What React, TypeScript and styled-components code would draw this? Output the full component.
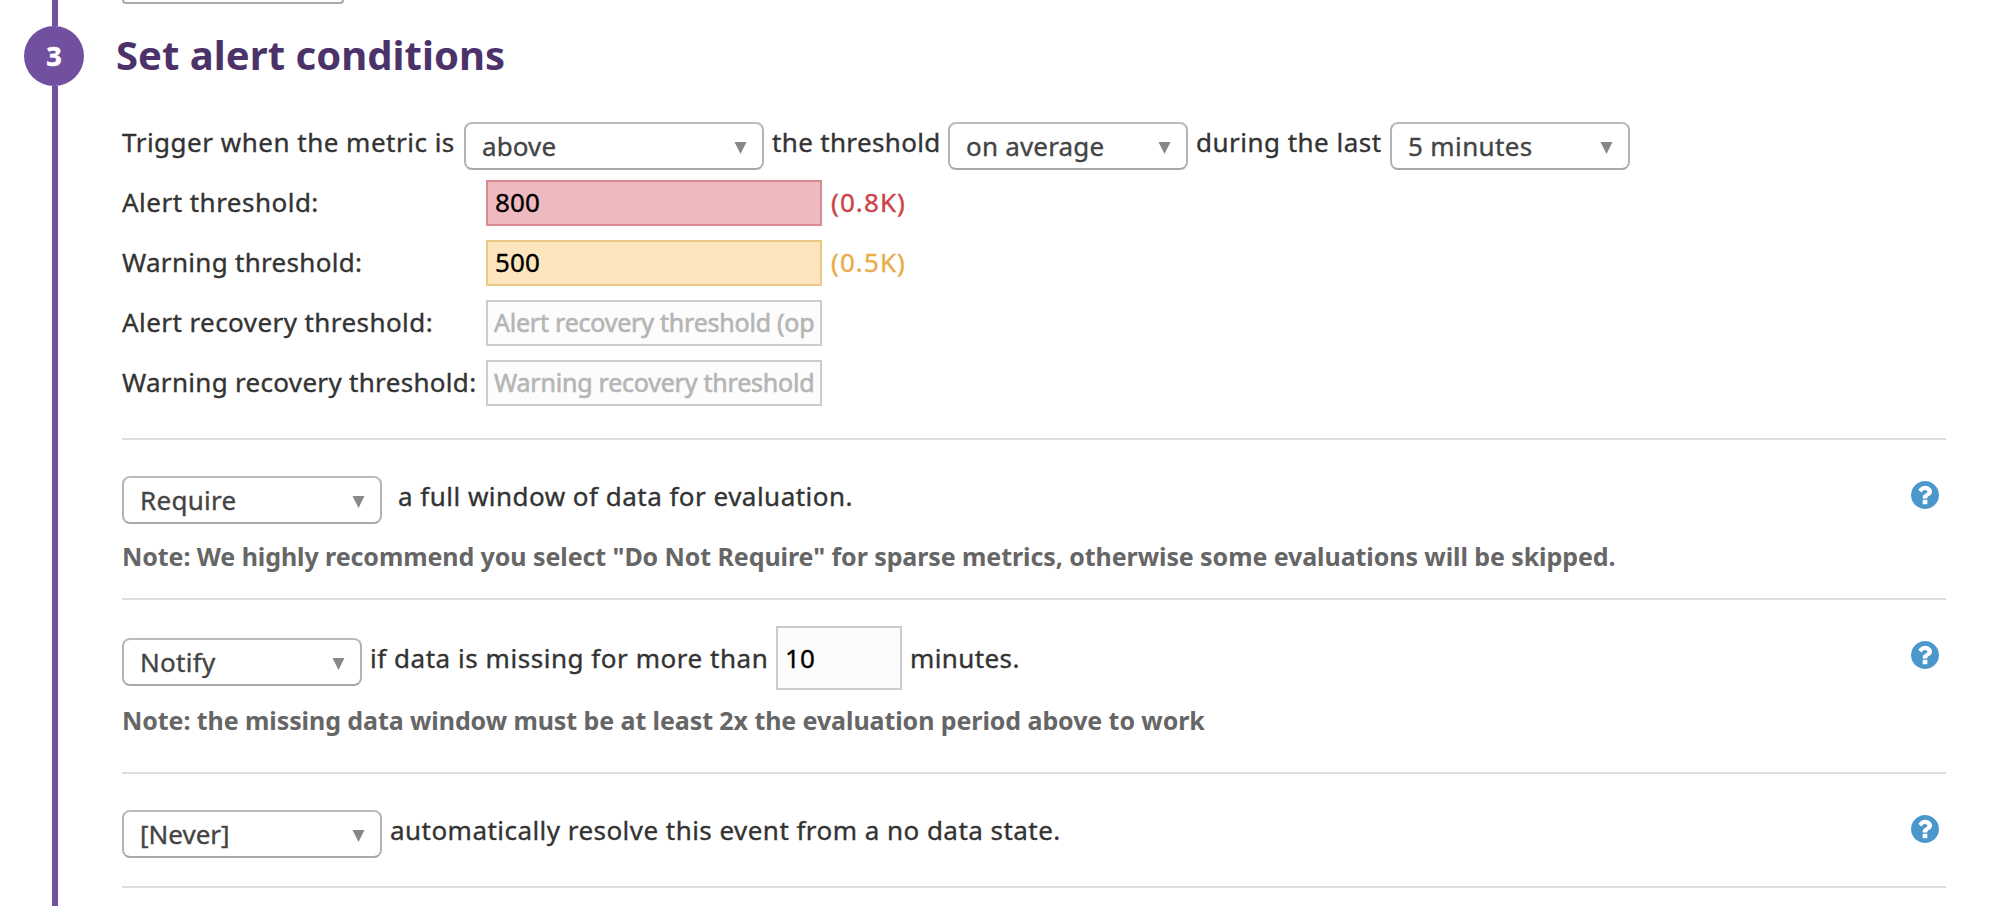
import React from 'react';
import styled, { createGlobalStyle } from 'styled-components';

const GlobalStyle = createGlobalStyle`
  *, *::before, *::after { box-sizing: border-box; }
  body {
    margin: 0;
    background: #fff;
    color: #333;
    font-family: "Noto Sans", "Open Sans", sans-serif;
    overflow: hidden;
  }
`;

const Page = styled.main`
  display: flex;
  height: 906px;
  overflow: hidden;
`;

const Rail = styled.aside`
  display: flex;
  flex-direction: column;
  flex: 0 0 116px;
`;

const RailLine = styled.div<{ $height?: number }>`
  width: 6px;
  margin-left: 52px;
  background: #7250a0;
  ${(p) => (p.$height ? `height: ${p.$height}px;` : 'flex: 1;')}
`;

const StepBadge = styled.div`
  width: 60px;
  height: 60px;
  margin-left: 24px;
  border-radius: 50%;
  background: #7250a0;
  color: #fff;
  font-size: 27px;
  font-weight: 700;
  line-height: 60px;
  text-align: center;
  -webkit-text-stroke: 0.5px;
`;

const Content = styled.div`
  flex: 1;
  padding-right: 52px;
`;

const PreviousField = styled.div`
  width: 222px;
  height: 4px;
  margin-left: 6px;
  border: 2px solid #aaa;
  border-top: 0;
  border-radius: 0 0 8px 8px;
`;

const Heading = styled.h2`
  margin: 21px 0 37px;
  color: #4b3269;
  font-size: 40px;
  font-weight: 700;
  line-height: 60px;
  letter-spacing: 0.04px;
`;

const Body = styled.div`
  margin-left: 6px;
  -webkit-text-stroke: 0.35px;
`;

const Row = styled.div`
  display: flex;
  align-items: flex-start;
`;

const Text = styled.span<{ $width?: number; $indent?: number; $top?: number; $tracking?: number }>`
  flex: none;
  ${(p) => p.$width && `width: ${p.$width}px;`}
  padding-left: ${(p) => p.$indent ?? 0}px;
  margin-top: ${(p) => p.$top ?? 0}px;
  font-size: 26px;
  line-height: 40px;
  letter-spacing: ${(p) => p.$tracking ?? 0.48}px;
  white-space: nowrap;
`;

const SelectBox = styled.button<{ $width: number; $top?: number; $tracking?: number }>`
  display: flex;
  align-items: center;
  justify-content: space-between;
  flex: none;
  width: ${(p) => p.$width}px;
  height: 48px;
  margin: ${(p) => p.$top ?? 0}px 0 0;
  padding: 0 15px 0 16px;
  border: 2px solid #b3b3b3;
  border-top-color: #bbb;
  border-bottom-color: #a8a8a8;
  border-radius: 8px;
  background: #fff;
  color: #444;
  font-family: inherit;
  font-size: 26px;
  line-height: 44px;
  letter-spacing: ${(p) => p.$tracking ?? 0.28}px;
  text-align: left;
  -webkit-text-stroke: 0.35px;
`;

const Arrow = styled.svg`
  width: 13px;
  height: 12px;
  margin-top: 4px;
  fill: #888;
`;

function Select({ label, ...box }: { label: string; $width: number; $top?: number; $tracking?: number }) {
  return (
    <SelectBox type="button" {...box}>
      {label}
      <Arrow viewBox="0 0 13 12">
        <path d="M0.500 0h12L6.500 12z" />
      </Arrow>
    </SelectBox>
  );
}

const tones = {
  plain: { border: '#ccc', fill: '#fcfcfc', text: '#333' },
  alert: { border: '#d98990', fill: '#efb9c0', text: '#cb4249' },
  warning: { border: '#edc784', fill: '#fde6be', text: '#ebab4a' },
};
type Tone = keyof typeof tones;

const ThresholdRow = styled.div`
  display: flex;
  align-items: flex-start;
  height: 46px;
  margin-top: 14px;

  &:first-of-type { margin-top: 10px; }
`;

const ThresholdText = styled.label<{ $tracking?: number }>`
  flex: 0 0 364px;
  font-size: 26px;
  line-height: 44px;
  letter-spacing: ${(p) => p.$tracking ?? 0.48}px;
  white-space: nowrap;
`;

const Field = styled.input<{ $tone: Tone; $width: number; $height: number }>`
  flex: none;
  width: ${(p) => p.$width}px;
  height: ${(p) => p.$height}px;
  margin: 0;
  padding: 0 6px ${(p) => (p.$height < 60 ? 2 : 0)}px 7px;
  border: 2px solid ${(p) => tones[p.$tone].border};
  border-radius: 0;
  outline: 0;
  background: ${(p) => tones[p.$tone].fill};
  color: #000;
  font-family: inherit;
  font-size: 26px;
  letter-spacing: 0.1px;
  -webkit-text-stroke: 0.35px;

  &::placeholder {
    color: #b5b5b5;
    font-size: 25px;
    letter-spacing: -0.22px;
    opacity: 1;
    -webkit-text-stroke: 0.6px;
  }

  &:placeholder-shown { padding-left: 6px; }
`;

const Converted = styled.span<{ $tone: Tone }>`
  padding-left: 9px;
  color: ${(p) => tones[p.$tone].text};
  font-size: 26px;
  line-height: 44px;
  letter-spacing: 1.1px;
`;

const Thresholds = styled.div`
  padding-bottom: 32px;
`;

const Section = styled.section<{ $height: number; $top?: number }>`
  display: flex;
  justify-content: space-between;
  align-items: flex-start;
  height: ${(p) => p.$height}px;
  padding-top: ${(p) => p.$top ?? 36}px;
  border-top: 2px solid #ddd;

  &:last-of-type { border-bottom: 2px solid #ddd; }
`;

const Note = styled.p<{ $gap: number }>`
  margin: ${(p) => p.$gap}px 0 0;
  color: #666;
  font-size: 25px;
  font-weight: 700;
  line-height: 30px;
  letter-spacing: -0.08px;
  white-space: nowrap;
  -webkit-text-stroke: 0;
`;

const HelpIcon = styled.svg<{ $top: number }>`
  flex: none;
  width: 28px;
  height: 28px;
  margin: ${(p) => p.$top}px 7px 0 0;
  fill: #4b97cb;
`;

function Help({ top = 5 }: { top?: number }) {
  return (
    <HelpIcon $top={top} viewBox="0 128 1536 1536" role="img" aria-label="Help">
      <path d="M896 1376v-192q0-14-9-23t-23-9h-192q-14 0-23 9t-9 23v192q0 14 9 23t23 9h192q14 0 23-9t9-23zm256-672q0-88-55.500-163t-138.500-116-170-41q-243 0-371 213-15 24 8 42l132 100q7 6 19 6 16 0 25-12 53-68 86-92 34-24 86-24 48 0 85.500 26t37.500 59q0 38-20 61t-68 45q-63 28-115.500 86.500t-52.500 125.500v36q0 14 9 23t23 9h192q14 0 23-9t9-23q0-19 21.500-49.500t54.500-49.500q32-18 49-28.500t46-35 44.500-48 28-60.500 12.500-81zm384 192q0 209-103 385.500t-279.500 279.500-385.500 103-385.500-103-279.500-279.500-103-385.500 103-385.500 279.500-279.500 385.500-103 385.500 103 279.500 279.500 103 385.500z" />
    </HelpIcon>
  );
}

const thresholds: {
  label: string;
  tone: Tone;
  value?: string;
  converted?: string;
  placeholder?: string;
  tracking?: number;
}[] = [
  { label: 'Alert threshold:', tone: 'alert', value: '800', converted: '(0.8K)' },
  { label: 'Warning threshold:', tone: 'warning', value: '500', converted: '(0.5K)', tracking: 0.3 },
  { label: 'Alert recovery threshold:', tone: 'plain', placeholder: 'Alert recovery threshold (optional)', tracking: 0.43 },
  { label: 'Warning recovery threshold:', tone: 'plain', placeholder: 'Warning recovery threshold (optional)', tracking: 0.31 },
];

export default function App() {
  return (
    <>
      <GlobalStyle />
      <Page>
        <Rail>
          <RailLine $height={26} />
          <StepBadge>3</StepBadge>
          <RailLine />
        </Rail>
        <Content>
          <PreviousField />
          <Heading>Set alert conditions</Heading>
          <Body>
            <Row>
              <Text $width={342} $tracking={0.5}>Trigger when the metric is</Text>
              <Select label="above" $width={300} $tracking={0.1} />
              <Text $width={184} $indent={8} $tracking={0.34}>the threshold</Text>
              <Select label="on average" $width={240} $tracking={0.19} />
              <Text $width={202} $indent={8}>during the last</Text>
              <Select label="5 minutes" $width={240} $tracking={0.37} />
            </Row>
            <Thresholds>
              {thresholds.map((t) => (
                <ThresholdRow key={t.label}>
                  <ThresholdText $tracking={t.tracking}>{t.label}</ThresholdText>
                  <Field
                    $tone={t.tone}
                    $width={336}
                    $height={46}
                    defaultValue={t.value}
                    placeholder={t.placeholder}
                    aria-label={t.label}
                  />
                  {t.converted && <Converted $tone={t.tone}>{t.converted}</Converted>}
                </ThresholdRow>
              ))}
            </Thresholds>

            <Section $height={160}>
              <div>
                <Row>
                  <Select label="Require" $width={260} />
                  <Text $indent={16}>a full window of data for evaluation.</Text>
                </Row>
                <Note $gap={17}>
                  Note: We highly recommend you select "Do Not Require" for sparse metrics, otherwise some evaluations
                  will be skipped.
                </Note>
              </div>
              <Help />
            </Section>

            <Section $height={174} $top={26}>
              <div>
                <Row>
                  <Select label="Notify" $width={240} $top={12} />
                  <Text $width={414} $indent={8} $top={12} $tracking={0.54}>if data is missing for more than</Text>
                  <Field $tone="plain" $width={126} $height={64} defaultValue="10" aria-label="Minutes" />
                  <Text $indent={8} $top={12} $tracking={0.4}>minutes.</Text>
                </Row>
                <Note $gap={15}>Note: the missing data window must be at least 2x the evaluation period above to work</Note>
              </div>
              <Help top={15} />
            </Section>

            <Section $height={116}>
              <Row>
                <Select label="[Never]" $width={260} $tracking={0} />
                <Text $indent={8} $tracking={0.46}>automatically resolve this event from a no data state.</Text>
              </Row>
              <Help />
            </Section>
          </Body>
        </Content>
      </Page>
    </>
  );
}
